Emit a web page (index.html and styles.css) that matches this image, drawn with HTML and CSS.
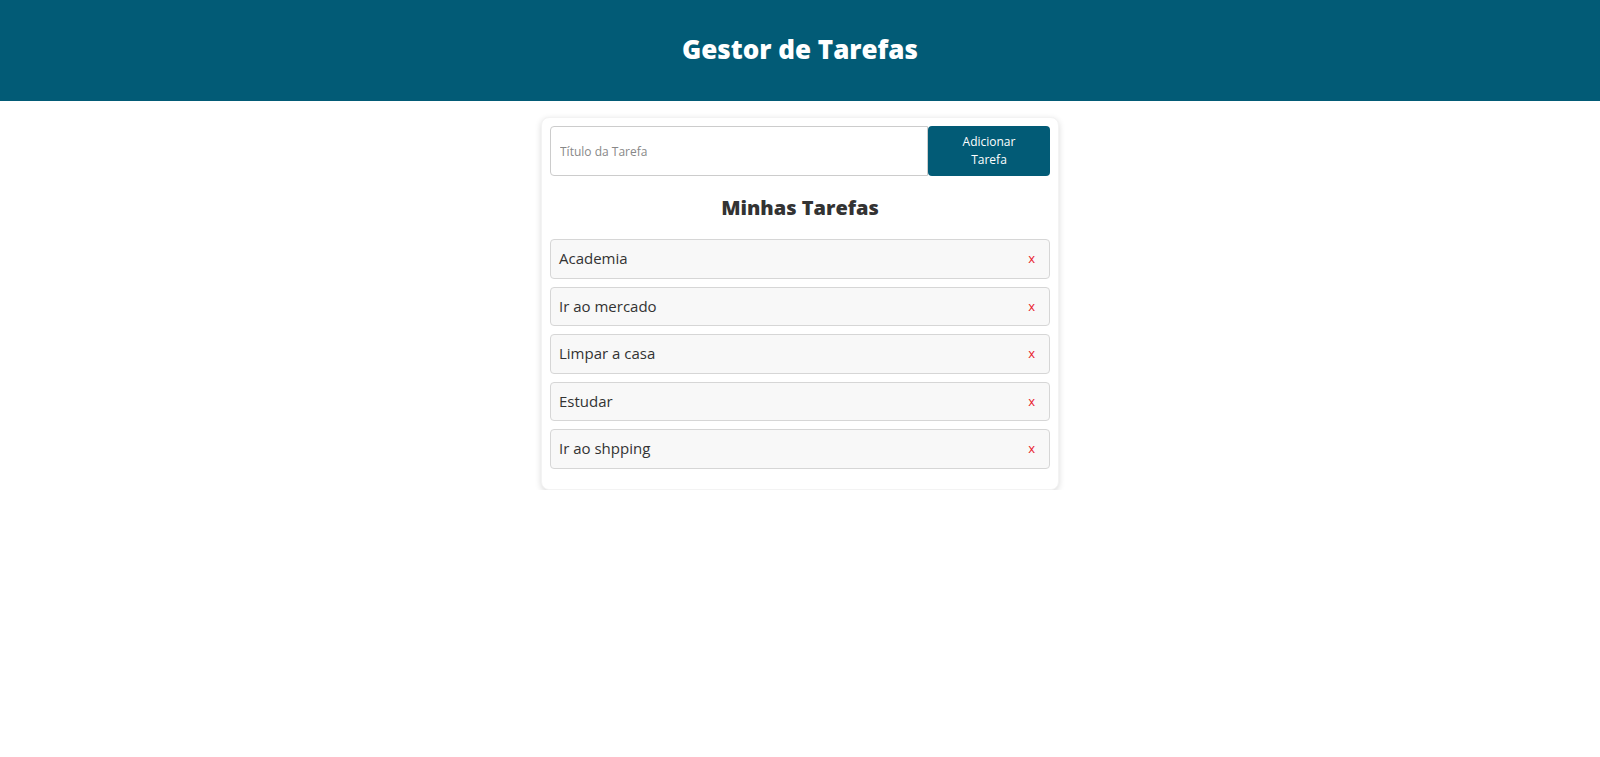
FILE: index.html
```html
<!DOCTYPE html>
<html lang="pt">
<head>
<meta charset="utf-8">
<title>Gestor de Tarefas</title>
<link rel="stylesheet" href="styles.css">
</head>
<body>
<header class="topbar">
  <h1 class="topbar-title">Gestor de Tarefas</h1>
</header>
<main class="card">
  <form class="add-form">
    <input class="add-input" type="text" placeholder="Título da Tarefa">
    <button class="add-btn" type="button">Adicionar Tarefa</button>
  </form>
  <h2 class="list-title">Minhas Tarefas</h2>
  <ul class="task-list">
    <li class="task"><span class="task-name">Academia</span><span class="task-del">x</span></li>
    <li class="task"><span class="task-name">Ir ao mercado</span><span class="task-del">x</span></li>
    <li class="task"><span class="task-name">Limpar a casa</span><span class="task-del">x</span></li>
    <li class="task"><span class="task-name">Estudar</span><span class="task-del">x</span></li>
    <li class="task"><span class="task-name">Ir ao shpping</span><span class="task-del">x</span></li>
  </ul>
</main>
</body>
</html>
```
FILE: styles.css
```css
* { box-sizing: border-box; }
body {
  margin: 0;
  font-family: "Open Sans", "Noto Sans", sans-serif;
  background: #fff;
  color: #333;
}
.topbar {
  height: 101px;
  padding-bottom: 3px;
  background: #025b76;
  display: flex;
  align-items: center;
  justify-content: center;
}
.topbar-title {
  margin: 0;
  color: #fff;
  font-size: 26px;
  font-weight: 800;
}
.card {
  width: 518px;
  margin: 16px auto 0;
  padding: 8px 8px 20px;
  border: 1px solid #f3f3f3;
  border-radius: 8px;
  box-shadow: 0 2px 6px rgba(0,0,0,0.15);
  background: #fff;
}
.add-form {
  display: flex;
  height: 50px;
}
.add-input {
  flex: 1;
  min-width: 0;
  border: 1px solid #ccc;
  border-radius: 4px 0 0 4px;
  padding: 0 9px;
  font-family: inherit;
  font-size: 12px;
  color: #333;
}
.add-input::placeholder { color: #888; }
.add-btn {
  width: 122px;
  border: none;
  border-radius: 4px;
  background: #025b76;
  color: #fff;
  font-family: inherit;
  font-size: 12px;
  line-height: 18px;
  padding: 0 22px;
}
.list-title {
  margin: 17px 0 16px;
  text-align: center;
  font-size: 20px;
  line-height: 30px;
  font-weight: 800;
  color: #333;
}
.task-list {
  list-style: none;
  margin: 0;
  padding: 0;
}
.task {
  display: flex;
  align-items: center;
  justify-content: space-between;
  padding: 8px 8px;
  margin-bottom: 8px;
  line-height: 21.5px;
  background: #f8f8f8;
  border: 1px solid #d6d6d6;
  border-radius: 4px;
  font-size: 15px;
  color: #333;
}
.task:last-child { margin-bottom: 0; }
.task-del {
  color: #e8202a;
  font-size: 13px;
  margin-right: 6px;
}
```
